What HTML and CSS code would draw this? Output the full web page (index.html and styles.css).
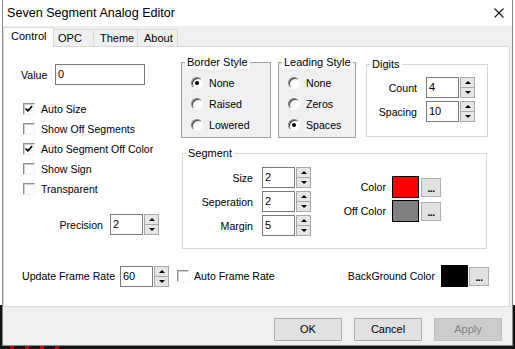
FILE: index.html
```html
<!DOCTYPE html>
<html lang="en">
<head>
  <meta charset="UTF-8" />
  <title>Seven Segment Analog Editor</title>
  <link rel="stylesheet" href="styles.css">
</head>
<body>
  <div class="window">
    <div class="titlebar">
      <span class="title">Seven Segment Analog Editor</span>
      <svg class="close" width="10" height="10" viewBox="0 0 10 10">
        <path d="M0.5 0.5 L9.5 9.5 M9.5 0.5 L0.5 9.5" stroke="#1a1a1a" stroke-width="1.1" fill="none"/>
      </svg>
    </div>

    <div class="tabs">
      <div class="tab active tab-control">Control</div>
      <div class="tab tab-opc">OPC</div>
      <div class="tab tab-theme">Theme</div>
      <div class="tab tab-about">About</div>
    </div>

    <div class="panel">
      <div class="panel-top">
        <div class="left-col">
          <div class="value-row">
            <span class="value-label">Value</span>
            <div class="textbox value-box">0</div>
          </div>

          <div class="checklist">
            <div class="check-row">
              <span class="check"><svg width="10" height="10" viewBox="0 0 10 10"><path d="M1.5 4.5 L3.8 6.8 L8.2 2.2" stroke="#000" stroke-width="1.7" fill="none"/></svg></span>Auto Size
            </div>
            <div class="check-row"><span class="check"></span>Show Off Segments</div>
            <div class="check-row">
              <span class="check"><svg width="10" height="10" viewBox="0 0 10 10"><path d="M1.5 4.5 L3.8 6.8 L8.2 2.2" stroke="#000" stroke-width="1.7" fill="none"/></svg></span>Auto Segment Off Color
            </div>
            <div class="check-row"><span class="check"></span>Show Sign</div>
            <div class="check-row"><span class="check"></span>Transparent</div>
          </div>

          <div class="precision-row">
            <span class="precision-label">Precision</span>
            <div class="textbox num">2</div>
            <div class="spin"><span class="up"></span><span class="down"></span></div>
          </div>
        </div>

        <div class="right-col">
          <div class="group-row">
            <fieldset class="group old border-style">
              <legend>Border Style</legend>
              <div class="radio-row"><span class="radio on"></span>None</div>
              <div class="radio-row"><span class="radio"></span>Raised</div>
              <div class="radio-row"><span class="radio"></span>Lowered</div>
            </fieldset>
            <fieldset class="group old leading-style">
              <legend>Leading Style</legend>
              <div class="radio-row"><span class="radio"></span>None</div>
              <div class="radio-row"><span class="radio"></span>Zeros</div>
              <div class="radio-row"><span class="radio on"></span>Spaces</div>
            </fieldset>
            <fieldset class="group digits">
              <legend>Digits</legend>
              <div class="field-grid digits-grid">
                <span class="field-label">Count</span>
                <div class="textbox num">4</div>
                <div class="spin"><span class="up"></span><span class="down"></span></div>
                <span class="field-label">Spacing</span>
                <div class="textbox num">10</div>
                <div class="spin"><span class="up"></span><span class="down"></span></div>
              </div>
            </fieldset>
          </div>

          <fieldset class="group segment">
            <legend>Segment</legend>
            <div class="segment-body">
              <div class="field-grid segment-grid">
                <span class="field-label">Size</span>
                <div class="textbox num">2</div>
                <div class="spin"><span class="up"></span><span class="down"></span></div>
                <span class="field-label">Seperation</span>
                <div class="textbox num">2</div>
                <div class="spin"><span class="up"></span><span class="down"></span></div>
                <span class="field-label">Margin</span>
                <div class="textbox num">5</div>
                <div class="spin"><span class="up"></span><span class="down"></span></div>
              </div>
              <div class="color-grid">
                <span class="field-label">Color</span>
                <span class="swatch swatch-red"></span>
                <span class="dots">...</span>
                <span class="field-label">Off Color</span>
                <span class="swatch swatch-gray"></span>
                <span class="dots">...</span>
              </div>
            </div>
          </fieldset>
        </div>
      </div>

      <div class="panel-bottom">
        <span class="rate-label">Update Frame Rate</span>
        <div class="textbox num">60</div>
        <div class="spin"><span class="up"></span><span class="down"></span></div>
        <span class="check check-auto"></span>
        <span>Auto Frame Rate</span>
        <div class="bg-color">
          <span class="bg-label">BackGround Color</span>
          <span class="swatch swatch-black"></span>
          <span class="dots">...</span>
        </div>
      </div>
    </div>

    <div class="actions">
      <div class="btn">OK</div>
      <div class="btn">Cancel</div>
      <div class="btn btn-disabled">Apply</div>
    </div>
  </div>

  <div class="desktop-strip">
    <span></span><span></span><span></span><span></span>
  </div>
</body>
</html>
```

FILE: styles.css
```css
* {
  box-sizing: border-box;
  margin: 0;
  padding: 0;
}

body {
  width: 515px;
  height: 349px;
  overflow: hidden;
  background: linear-gradient(to bottom, #ffffff 0, #ffffff 305px, #141414 305px);
  font-family: "Liberation Sans", Arial, sans-serif;
  font-size: 10.6px;
  color: #000;
}

.window {
  margin-left: 2px;
  width: 511px;
  height: 346px;
  border: 1px solid #8a8a8a;
  border-top: none;
  background: #f0f0f0;
  display: flex;
  flex-direction: column;
}

/* title bar */
.titlebar {
  height: 26px;
  flex-shrink: 0;
  background: #fff;
  display: flex;
  align-items: center;
  justify-content: space-between;
  padding: 0 8px 0 4px;
}

.title {
  font-size: 12.6px;
  color: #000;
}

/* tabs */
.tabs {
  height: 20px;
  flex-shrink: 0;
  display: flex;
  align-items: flex-end;
  position: relative;
  z-index: 1;
}

.tab {
  height: 17px;
  border: 1px solid #d9d9d9;
  border-bottom: none;
  margin-left: -1px;
  background: #f0f0f0;
  font-size: 11px;
  line-height: 16px;
  padding-left: 6px;
}

.tab.active {
  height: 20px;
  margin-left: 0;
  margin-bottom: -1px;
  background: #fff;
  padding-left: 7px;
  line-height: 17px;
}

.tab-control { width: 51px; }
.tab-opc { width: 41px; padding-left: 4px; }
.tab-theme { width: 45px; }
.tab-about { width: 41px; }

/* panel */
.panel {
  width: 507px;
  height: 261px;
  flex-shrink: 0;
  background: #fff;
  border: 1px solid #d9d9d9;
  display: flex;
  flex-direction: column;
}

.panel-top {
  display: flex;
}

.left-col {
  width: 178px;
  padding-left: 17px;
}

.value-row {
  margin-top: 17px;
  display: flex;
  align-items: center;
}

.value-label {
  width: 34px;
}

.textbox {
  height: 21px;
  border: 1px solid #7a7a7a;
  background: #fff;
  padding-left: 2px;
  line-height: 19px;
  font-size: 11px;
}

.value-box {
  width: 90px;
}

.num {
  width: 33px;
}

.spin {
  width: 15px;
  height: 21px;
  margin-left: 1px;
  display: flex;
  flex-direction: column;
}

.spin span {
  flex: 1;
  background: #e6e6e6;
  border: 1px solid #a8a8a8;
  display: flex;
  align-items: center;
  justify-content: center;
}

.spin .down {
  border-top: none;
}

.spin .up::before {
  content: '';
  border-left: 3px solid transparent;
  border-right: 3px solid transparent;
  border-bottom: 3px solid #000;
}

.spin .down::before {
  content: '';
  border-left: 3px solid transparent;
  border-right: 3px solid transparent;
  border-top: 3px solid #000;
}

.checklist {
  margin-top: 14px;
}

.check-row {
  height: 20px;
  display: flex;
  align-items: center;
  padding-left: 2px;
}

.check {
  width: 12px;
  height: 12px;
  margin-right: 6px;
  background: #fff;
  border: 1px solid;
  border-color: #8e8e8e #f4f4f4 #f4f4f4 #8e8e8e;
  box-shadow: inset 1px 1px 0 #cfcfcf;
  display: flex;
  align-items: center;
  justify-content: center;
  flex-shrink: 0;
}

.precision-row {
  margin-top: 15px;
  display: flex;
  align-items: center;
}

.precision-label {
  width: 82px;
  text-align: right;
  margin-right: 7px;
}

/* group boxes */
.right-col {
  width: 308px;
}

.group-row {
  margin-top: 9px;
  display: flex;
  align-items: flex-start;
}

.group {
  border: 1px solid #d7d7d7;
  min-width: 0;
}

.group legend {
  margin-left: 3px;
  padding: 0 2px;
  font-size: 11px;
  line-height: 13px;
  white-space: nowrap;
  background: #fff;
}

.group.old {
  border-color: #a0a0a0;
  background: #f0f0f0;
  padding: 3px 0 2px 0;
}

.border-style {
  width: 90px;
  margin-left: -1px;
}

.leading-style {
  width: 78px;
  margin-left: 7px;
}

.radio-row {
  height: 21px;
  padding-left: 9px;
  display: flex;
  align-items: center;
}

.radio {
  width: 12px;
  height: 12px;
  margin-right: 6px;
  border-radius: 50%;
  border: 1px solid;
  border-color: #808080 #fdfdfd #fdfdfd #808080;
  box-shadow: inset 1px 1px 0 #404040;
  background: #fff;
  display: flex;
  align-items: center;
  justify-content: center;
}

.radio.on::after {
  content: '';
  width: 4px;
  height: 4px;
  border-radius: 50%;
  background: #000;
}

.digits {
  width: 122px;
  margin-left: 10px;
  margin-top: 2px;
  padding: 6px 0 14px 0;
}

.field-grid {
  display: grid;
  align-items: center;
  row-gap: 3px;
}

.field-grid .field-label {
  text-align: right;
  margin-right: 9px;
}

.digits-grid {
  grid-template-columns: 59px 33px 16px;
}

.segment {
  width: 305px;
  margin-top: 9px;
  padding: 7px 0 12px 0;
}

.segment-body {
  display: flex;
  align-items: flex-start;
}

.segment-grid {
  grid-template-columns: 79px 33px 16px;
}

.color-grid {
  margin-top: 9px;
  margin-left: 16px;
  display: grid;
  grid-template-columns: 59px 35px 20px;
  row-gap: 2px;
  align-items: center;
}

.color-grid .field-label {
  text-align: right;
}

.swatch {
  width: 27px;
  height: 22px;
  border: 1px solid #000;
}

.color-grid .swatch {
  margin-left: 6px;
}

.swatch-red { background: #ff0000; }
.swatch-gray { background: #808080; }
.swatch-black { background: #000; }

.dots {
  width: 20px;
  height: 19px;
  background: #e1e1e1;
  border: 1px solid #adadad;
  font-size: 10px;
  font-weight: bold;
  line-height: 19px;
  text-align: center;
  letter-spacing: -0.5px;
}

/* bottom row of the panel */
.panel-bottom {
  margin-top: 16px;
  padding: 0 20px 0 18px;
  display: flex;
  align-items: center;
}

.rate-label {
  width: 98px;
}

.check-auto {
  margin-left: 8px;
  margin-right: 5px;
}

.bg-color {
  margin-left: auto;
  display: flex;
  align-items: center;
}

.bg-label {
  margin-right: 6px;
}

.bg-color .dots {
  margin-left: 1px;
}

/* dialog buttons */
.actions {
  flex: 1;
  display: flex;
  justify-content: flex-end;
  align-items: flex-start;
  gap: 12px;
  padding: 11px 10px 0 0;
}

.btn {
  width: 68px;
  height: 23px;
  background: #e1e1e1;
  border: 1px solid #adadad;
  font-size: 11px;
  line-height: 21px;
  text-align: center;
}

.btn-disabled {
  background: #cccccc;
  border-color: #bfbfbf;
  color: #838383;
}

.desktop-strip {
  height: 3px;
  background: #141414;
  display: flex;
  gap: 11px;
  padding-left: 10px;
}

.desktop-strip span {
  width: 4px;
  background: #c00000;
}
```
